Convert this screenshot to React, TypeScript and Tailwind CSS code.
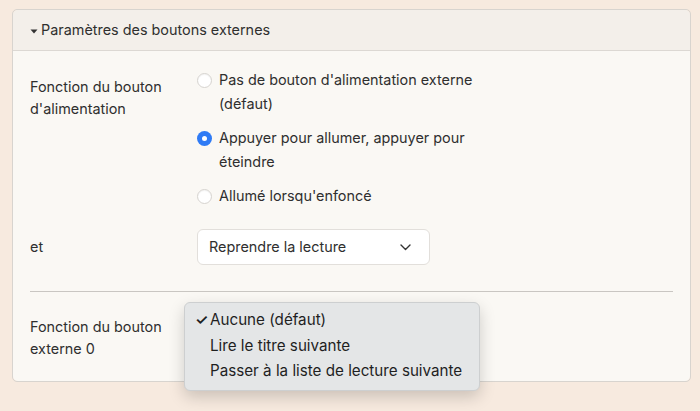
import type { ReactNode } from "react";

const powerOptions = [
  { label: "Pas de bouton d'alimentation externe (défaut)", checked: false },
  { label: "Appuyer pour allumer, appuyer pour éteindre", checked: true },
  { label: "Allumé lorsqu'enfoncé", checked: false },
];

const menuOptions = [
  { label: "Aucune (défaut)", checked: true },
  { label: "Lire le titre suivante", checked: false },
  { label: "Passer à la liste de lecture suivante", checked: false },
];

export default function App() {
  return (
    <div className="min-h-[411px] bg-[#f7eadf] px-[12px] pt-[9px] text-[14.4px] text-[#2f2f2f] [font-family:Inter,'Noto_Sans',sans-serif]">
      <div className="w-[679px] rounded-[5px] border border-[#d8d4cf]">
        <div className="flex h-[41px] items-center gap-[3px] rounded-t-[5px] border-b border-[#dcd8d3] bg-[#f3efea] px-[17px]">
          <svg width="8" height="5" viewBox="0 0 8 5" className="mt-[2px]">
            <path d="M0.5 0.5 L7.5 0.5 L4 4.5 Z" fill="#333" />
          </svg>
          <span>Paramètres des boutons externes</span>
        </div>

        <div className="rounded-b-[5px] bg-[#faf8f4] px-[17px] pb-[21px] pt-[17px]">
          <Row label={"Fonction du bouton\nd'alimentation"} labelClass="pt-[8px]">
            <div className="flex w-[290px] flex-col gap-[10px]">
              {powerOptions.map((opt) => (
                <label key={opt.label} className="flex items-start gap-[7px] leading-[24px]">
                  <Radio checked={opt.checked} />
                  <span>{opt.label}</span>
                </label>
              ))}
            </div>
          </Row>

          <div className="mt-[21px]">
            <Row label="et" labelClass="self-center">
              <Select value="Reprendre la lecture" />
            </Row>
          </div>

          <div className="mb-[24px] mt-[26px] border-t border-[#c9c6c2]" />

          <Row label={"Fonction du bouton\nexterne 0"} labelClass="">
            <div className="relative h-[44px]">
              <div className="absolute left-[-13px] top-[-14px] z-10 w-[296px] rounded-[6px] border border-[#cdcfd0] bg-[#e4e6e7] pb-[6px] pt-[4px] text-[15.2px] text-[#1f1f1f] shadow-[0_6px_16px_rgba(0,0,0,0.18)]">
                {menuOptions.map((opt) => (
                  <div key={opt.label} className="flex items-center leading-[25.5px]">
                    <span className="w-[25px] pl-[10px] text-[15px] font-semibold">{opt.checked ? "✓" : ""}</span>
                    <span>{opt.label}</span>
                  </div>
                ))}
              </div>
            </div>
          </Row>
        </div>
      </div>
    </div>
  );
}

function Row(props: { label: string; labelClass: string; children: ReactNode }) {
  return (
    <div className="grid grid-cols-[167px_1fr] items-start">
      <div className={"whitespace-pre-line leading-[22px] " + props.labelClass}>
        {props.label}
      </div>
      <div>{props.children}</div>
    </div>
  );
}

function Radio(props: { checked: boolean }) {
  if (props.checked) {
    return (
      <span className="mt-[5px] flex h-[15px] w-[15px] shrink-0 items-center justify-center rounded-full bg-[#2f7bf5]">
        <span className="h-[5px] w-[5px] rounded-full bg-white" />
      </span>
    );
  }
  return (
    <span className="mt-[5px] h-[15px] w-[15px] shrink-0 rounded-full border border-[#d6d3cf] bg-white shadow-[inset_0_1px_1px_rgba(0,0,0,0.05)]" />
  );
}

function Select(props: { value: string }) {
  return (
    <div className="flex h-[36px] w-[233px] items-center justify-between rounded-[6px] border border-[#e2dfdb] bg-white pl-[11px] pr-[18px]">
      <span>{props.value}</span>
      <svg width="11" height="7" viewBox="0 0 11 7">
        <path d="M1 1 L5.5 5.5 L10 1" fill="none" stroke="#333" strokeWidth="1.4" strokeLinecap="round" strokeLinejoin="round" />
      </svg>
    </div>
  );
}
